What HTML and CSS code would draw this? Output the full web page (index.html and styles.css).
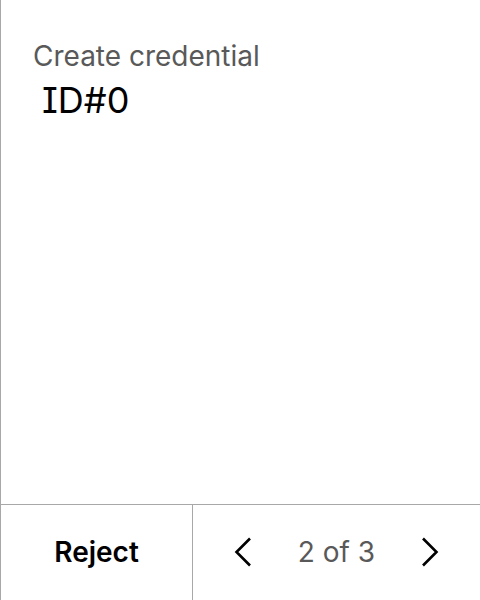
FILE: index.html
```html
<!DOCTYPE html>
<html>
<head>
<meta charset="utf-8">
<link rel="stylesheet" href="styles.css">
</head>
<body>
<div class="screen">
  <main class="content">
    <div class="title">Create credential</div>
    <div class="value">ID#0</div>
  </main>
  <footer class="footer">
    <div class="reject">Reject</div>
    <div class="pager">
      <svg class="chev" width="18" height="30" viewBox="0 0 18 30"><path d="M16 1.5 L2.5 15 L16 28.5" fill="none" stroke="#000" stroke-width="2.6"/></svg>
      <span class="count">2 of 3</span>
      <svg class="chev" width="18" height="30" viewBox="0 0 18 30"><path d="M2 1.5 L15.5 15 L2 28.5" fill="none" stroke="#000" stroke-width="2.6"/></svg>
    </div>
  </footer>
</div>
</body>
</html>
```
FILE: styles.css
```css
html, body {
  margin: 0;
  padding: 0;
  background: #fff;
}
.screen {
  width: 480px;
  height: 600px;
  box-sizing: border-box;
  border-left: 1px solid #a8a8a8;
  display: flex;
  flex-direction: column;
  font-family: Inter, "Noto Sans", sans-serif;
  font-feature-settings: "cv08" 1;
}
.content {
  flex: 1;
  padding: 40px 0 0 32px;
}
.title {
  font-size: 28px;
  color: #595959;
  line-height: 32px;
}
.value {
  font-size: 36px;
  color: #000;
  line-height: 40px;
  margin-left: 9px;
  margin-top: 8px;
}
.footer {
  height: 95px;
  border-top: 1px solid #a8a8a8;
  display: flex;
}
.reject {
  width: 191px;
  border-right: 1px solid #a8a8a8;
  display: flex;
  align-items: center;
  justify-content: center;
  padding-bottom: 2px;
  font-size: 28px;
  font-weight: 600;
  color: #000;
}
.pager {
  flex: 1;
  display: flex;
  align-items: center;
  justify-content: center;
  gap: 46px;
  padding-bottom: 2px;
}
.count {
  font-size: 28px;
  color: #595959;
}
.chev {
  display: block;
}
```
